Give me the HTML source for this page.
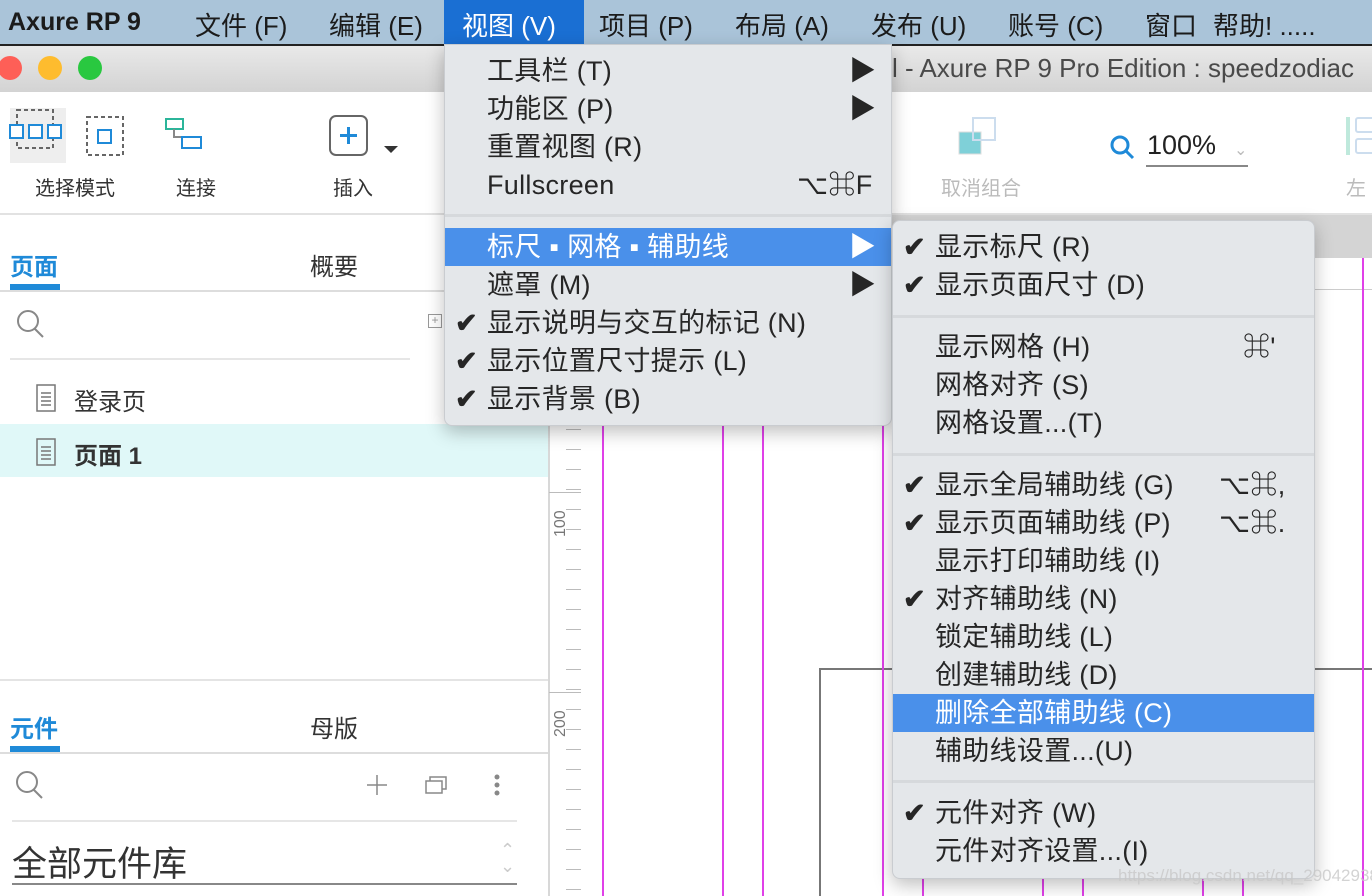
<!DOCTYPE html>
<html style="overflow:hidden;width:1372px;height:896px"><head><meta charset="utf-8"><style>
*{margin:0;padding:0;box-sizing:border-box}
body{width:1372px;height:896px;overflow:hidden;position:relative;background:#fff;font-family:"Liberation Sans","Noto Sans CJK SC",sans-serif;color:#333}
.a{position:absolute}
.mb{left:0;top:0;width:1372px;height:44px;background:#aac4d9;font-size:26px;color:#1b1b1b}
.mb span{position:absolute;top:6px;white-space:nowrap}
.menu{background:#e4e7ea;border:1px solid #c9ccd0;box-shadow:0 6px 18px rgba(0,0,0,.25);font-size:27px;letter-spacing:0.3px;color:#262626}
.it{position:absolute;left:0;right:0;height:38px;line-height:38px;white-space:nowrap}
.it .t{position:absolute}
.it .c{position:absolute;font-weight:bold}
.it .r{position:absolute}
.hl{background:#4a90ea;color:#fff}
.sep{position:absolute;left:0;right:0;height:3px;background:#d6d9dc}
.mg{position:absolute;top:258px;height:638px;width:2px;background:#e040e8}
</style></head><body>
<div class="a mb">
<span style="left:8px;font-weight:bold;font-size:25px;top:8px">Axure RP 9</span>
<span style="left:195px">文件 (F)</span>
<span style="left:329px">编辑 (E)</span>
<div class="a" style="left:444px;top:0;width:140px;height:44px;background:#1a6fd3"></div>
<span style="left:462px;color:#fff">视图 (V)</span>
<span style="left:599px">项目 (P)</span>
<span style="left:735px">布局 (A)</span>
<span style="left:871px">发布 (U)</span>
<span style="left:1008px">账号 (C)</span>
<span style="left:1145px">窗口</span>
<span style="left:1213px">帮助! .....</span>
</div>
<div class="a" style="left:0;top:44px;width:1372px;height:48px;background:linear-gradient(#e9e9e9,#d3d3d3);border-top:2px solid #222"></div>
<div class="a" style="left:-2px;top:56px;width:24px;height:24px;border-radius:50%;background:#fe5f57"></div>
<div class="a" style="left:38px;top:56px;width:24px;height:24px;border-radius:50%;background:#febc2e"></div>
<div class="a" style="left:78px;top:56px;width:24px;height:24px;border-radius:50%;background:#29c840"></div>
<div class="a" style="left:892px;top:53px;font-size:26px;color:#4a4a4a;white-space:nowrap">l - Axure RP 9 Pro Edition : speedzodiac</div>
<!-- toolbar -->
<div class="a" style="left:0;top:92px;width:1372px;height:123px;background:#fff;border-bottom:2px solid #e2e2e2"></div>
<div class="a" style="left:10px;top:108px;width:56px;height:55px;background:#eee"></div>
<svg class="a" style="left:0;top:100px" width="240" height="70">
<rect x="17" y="10" width="36" height="38" fill="none" stroke="#666" stroke-width="2" stroke-dasharray="4 3"/>
<rect x="10" y="25" width="13" height="13" fill="#fff" stroke="#1f8ad8" stroke-width="2"/>
<rect x="29" y="25" width="13" height="13" fill="#fff" stroke="#1f8ad8" stroke-width="2"/>
<rect x="48" y="25" width="13" height="13" fill="#fff" stroke="#1f8ad8" stroke-width="2"/>
<rect x="87" y="17" width="36" height="38" fill="none" stroke="#666" stroke-width="2" stroke-dasharray="4 3"/>
<rect x="98" y="30" width="13" height="13" fill="none" stroke="#1f8ad8" stroke-width="2"/>
<rect x="166" y="19" width="17" height="10" fill="none" stroke="#2bb59a" stroke-width="2"/>
<path d="M174 29 V37 H192" fill="none" stroke="#888" stroke-width="2"/>
<rect x="182" y="37" width="19" height="11" fill="none" stroke="#1f8ad8" stroke-width="2"/>
</svg>
<svg class="a" style="left:328px;top:114px" width="76" height="46">
<rect x="2" y="2" width="37" height="39" rx="6" fill="none" stroke="#666" stroke-width="2"/>
<path d="M20.5 13v17M12 21.5h17" stroke="#1f8ad8" stroke-width="3"/>
<path d="M56 32h14l-7 7z" fill="#333"/>
</svg>
<div class="a" style="left:35px;top:172px;font-size:20px">选择模式</div>
<div class="a" style="left:176px;top:172px;font-size:20px">连接</div>
<div class="a" style="left:333px;top:172px;font-size:20px">插入</div>
<div class="a" style="left:866px;top:172px;font-size:20px;color:#bbb">合</div>
<svg class="a" style="left:955px;top:114px" width="50" height="44"><rect x="4" y="18" width="22" height="22" fill="#7fd0d8" stroke="#ddd"/><rect x="18" y="4" width="22" height="22" fill="none" stroke="#cde" stroke-width="2"/></svg>
<div class="a" style="left:941px;top:172px;font-size:20px;color:#bbb">取消组合</div>
<svg class="a" style="left:1108px;top:133px" width="30" height="30"><circle cx="12" cy="12" r="8" fill="none" stroke="#1f8ad8" stroke-width="3"/><path d="M18 18l7 7" stroke="#1f8ad8" stroke-width="3"/></svg>
<div class="a" style="left:1147px;top:130px;font-size:27px;color:#222">100%</div>
<div class="a" style="left:1234px;top:140px;font-size:16px;color:#bbb">⌄</div>
<div class="a" style="left:1146px;top:165px;width:102px;height:2px;background:#888"></div>
<div class="a" style="left:1346px;top:117px;width:4px;height:38px;background:#bfe9dc"></div>
<div class="a" style="left:1355px;top:117px;width:20px;height:16px;border:2px solid #cde;border-radius:3px"></div>
<div class="a" style="left:1355px;top:138px;width:20px;height:16px;border:2px solid #cde;border-radius:3px"></div>
<div class="a" style="left:1346px;top:172px;font-size:20px;color:#bbb">左</div>
<!-- left panel -->
<div class="a" style="left:548px;top:215px;width:2px;height:681px;background:#d8d8d8"></div>
<div class="a" style="left:10px;top:247px;font-size:24px;font-weight:bold;color:#1f8ad8">页面</div>
<div class="a" style="left:10px;top:284px;width:50px;height:6px;background:#1f8ad8"></div>
<div class="a" style="left:310px;top:247px;font-size:24px;color:#333">概要</div>
<div class="a" style="left:0;top:290px;width:548px;height:2px;background:#ddd"></div>
<svg class="a" style="left:14px;top:308px" width="34" height="34"><circle cx="14" cy="13" r="10" fill="none" stroke="#888" stroke-width="2"/><path d="M21 21l8 8" stroke="#888" stroke-width="2"/></svg>
<div class="a" style="left:428px;top:314px;width:14px;height:14px;border:1.5px solid #999;font-size:12px;line-height:11px;text-align:center;color:#999">+</div>
<div class="a" style="left:10px;top:358px;width:400px;height:2px;background:#e6e6e6"></div>
<svg class="a" style="left:36px;top:384px" width="20" height="30"><rect x="1" y="1" width="18" height="26" fill="none" stroke="#777" stroke-width="1.5"/><path d="M5 9h10M5 13h10M5 17h10M5 21h10" stroke="#777" stroke-width="1.5"/></svg>
<div class="a" style="left:74px;top:382px;font-size:24px">登录页</div>
<div class="a" style="left:0;top:424px;width:548px;height:53px;background:#e0f8f8"></div>
<svg class="a" style="left:36px;top:438px" width="20" height="30"><rect x="1" y="1" width="18" height="26" fill="none" stroke="#777" stroke-width="1.5"/><path d="M5 9h10M5 13h10M5 17h10M5 21h10" stroke="#777" stroke-width="1.5"/></svg>
<div class="a" style="left:74px;top:436px;font-size:24px;font-weight:bold">页面 1</div>
<div class="a" style="left:0;top:679px;width:548px;height:2px;background:#e4e4e4"></div>
<div class="a" style="left:10px;top:709px;font-size:24px;font-weight:bold;color:#1f8ad8">元件</div>
<div class="a" style="left:10px;top:746px;width:50px;height:6px;background:#1f8ad8"></div>
<div class="a" style="left:310px;top:709px;font-size:24px;color:#333">母版</div>
<div class="a" style="left:0;top:752px;width:548px;height:2px;background:#ddd"></div>
<svg class="a" style="left:14px;top:770px" width="34" height="34"><circle cx="13" cy="12" r="10" fill="none" stroke="#888" stroke-width="2"/><path d="M20 20l8 8" stroke="#888" stroke-width="2"/></svg>
<svg class="a" style="left:365px;top:772px" width="150" height="30"><path d="M12 3v20M2 13h20" stroke="#888" stroke-width="1.5"/><rect x="61" y="9" width="16" height="12" fill="#fff" stroke="#888" stroke-width="1.5"/><path d="M65 9V5h16v12h-4" fill="none" stroke="#888" stroke-width="1.5"/><circle cx="132" cy="5" r="2.5" fill="#888"/><circle cx="132" cy="13" r="2.5" fill="#888"/><circle cx="132" cy="21" r="2.5" fill="#888"/></svg>
<div class="a" style="left:12px;top:820px;width:505px;height:2px;background:#e6e6e6"></div>
<div class="a" style="left:12px;top:836px;font-size:35px;color:#333">全部元件库</div>
<div class="a" style="left:500px;top:842px;font-size:18px;color:#ccc;line-height:16px">⌃<br>⌄</div>
<div class="a" style="left:12px;top:883px;width:505px;height:2px;background:#888"></div>
<!-- canvas -->
<div class="a" style="left:550px;top:215px;width:822px;height:43px;background:#d4d4d4"></div>
<div class="a" style="left:550px;top:258px;width:822px;height:32px;background:#fff;border-bottom:1px solid #ccc"></div>
<div class="a" style="left:550px;top:258px;width:31px;height:638px;background:#fff;border-right:2px solid #ccc"></div>
<div class="a" style="left:552px;font-size:16px;color:#777;transform:rotate(-90deg);transform-origin:left top;top:537px">100</div>
<div class="a" style="left:552px;top:737px;font-size:16px;color:#777;transform:rotate(-90deg);transform-origin:left top">200</div>
<div class="a" style="left:566px;top:290px;width:15px;height:606px;background:repeating-linear-gradient(#fff 0 19px,#bbb 19px 20px)"></div>
<div class="a" style="left:549px;top:492px;width:32px;height:1px;background:#bbb"></div>
<div class="a" style="left:549px;top:692px;width:32px;height:1px;background:#bbb"></div>
<div class="a" style="left:819px;top:668px;width:553px;height:228px;border-left:2px solid #777;border-top:2px solid #777"></div>
<div class="mg" style="left:602px"></div><div class="mg" style="left:722px"></div><div class="mg" style="left:762px"></div><div class="mg" style="left:882px"></div><div class="mg" style="left:922px"></div><div class="mg" style="left:1042px"></div><div class="mg" style="left:1082px"></div><div class="mg" style="left:1202px"></div><div class="mg" style="left:1242px"></div><div class="mg" style="left:1362px"></div>
<!-- main menu -->
<div class="a menu" style="left:444px;top:44px;width:448px;height:382px;border-radius:0 0 8px 8px">
<div class="it" style="top:7px"><span class="t" style="left:42px">工具栏 (T)</span><span class="r" style="left:404px">▶</span></div>
<div class="it" style="top:45px"><span class="t" style="left:42px">功能区 (P)</span><span class="r" style="left:404px">▶</span></div>
<div class="it" style="top:83px"><span class="t" style="left:42px">重置视图 (R)</span></div>
<div class="it" style="top:121px"><span class="t" style="left:42px">Fullscreen</span><span class="r" style="left:352px">⌥⌘F</span></div>
<div class="sep" style="top:169px"></div>
<div class="it hl" style="top:183px"><span class="t" style="left:42px">标尺 ▪ 网格 ▪ 辅助线</span><span class="r" style="left:404px">▶</span></div>
<div class="it" style="top:221px"><span class="t" style="left:42px">遮罩 (M)</span><span class="r" style="left:404px">▶</span></div>
<div class="it" style="top:259px"><span class="c" style="left:10px">✔</span><span class="t" style="left:42px">显示说明与交互的标记 (N)</span></div>
<div class="it" style="top:297px"><span class="c" style="left:10px">✔</span><span class="t" style="left:42px">显示位置尺寸提示 (L)</span></div>
<div class="it" style="top:335px"><span class="c" style="left:10px">✔</span><span class="t" style="left:42px">显示背景 (B)</span></div>
</div>
<!-- submenu -->
<div class="a menu" style="left:892px;top:220px;width:423px;height:659px;border-radius:8px">
<div class="it" style="top:7px"><span class="c" style="left:10px">✔</span><span class="t" style="left:42px">显示标尺 (R)</span></div>
<div class="it" style="top:45px"><span class="c" style="left:10px">✔</span><span class="t" style="left:42px">显示页面尺寸 (D)</span></div>
<div class="sep" style="top:94px"></div>
<div class="it" style="top:107px"><span class="t" style="left:42px">显示网格 (H)</span><span class="r" style="left:350px">⌘'</span></div>
<div class="it" style="top:145px"><span class="t" style="left:42px">网格对齐 (S)</span></div>
<div class="it" style="top:183px"><span class="t" style="left:42px">网格设置...(T)</span></div>
<div class="sep" style="top:232px"></div>
<div class="it" style="top:245px"><span class="c" style="left:10px">✔</span><span class="t" style="left:42px">显示全局辅助线 (G)</span><span class="r" style="left:326px">⌥⌘,</span></div>
<div class="it" style="top:283px"><span class="c" style="left:10px">✔</span><span class="t" style="left:42px">显示页面辅助线 (P)</span><span class="r" style="left:326px">⌥⌘.</span></div>
<div class="it" style="top:321px"><span class="t" style="left:42px">显示打印辅助线 (I)</span></div>
<div class="it" style="top:359px"><span class="c" style="left:10px">✔</span><span class="t" style="left:42px">对齐辅助线 (N)</span></div>
<div class="it" style="top:397px"><span class="t" style="left:42px">锁定辅助线 (L)</span></div>
<div class="it" style="top:435px"><span class="t" style="left:42px">创建辅助线 (D)</span></div>
<div class="it hl" style="top:473px"><span class="t" style="left:42px">删除全部辅助线 (C)</span></div>
<div class="it" style="top:511px"><span class="t" style="left:42px">辅助线设置...(U)</span></div>
<div class="sep" style="top:559px"></div>
<div class="it" style="top:573px"><span class="c" style="left:10px">✔</span><span class="t" style="left:42px">元件对齐 (W)</span></div>
<div class="it" style="top:611px"><span class="t" style="left:42px">元件对齐设置...(I)</span></div>
</div>
<div class="a" style="left:1118px;top:866px;font-size:17px;color:rgba(200,200,200,.8);white-space:nowrap">https://blog.csdn.net/qq_29042938</div>
</body></html>
